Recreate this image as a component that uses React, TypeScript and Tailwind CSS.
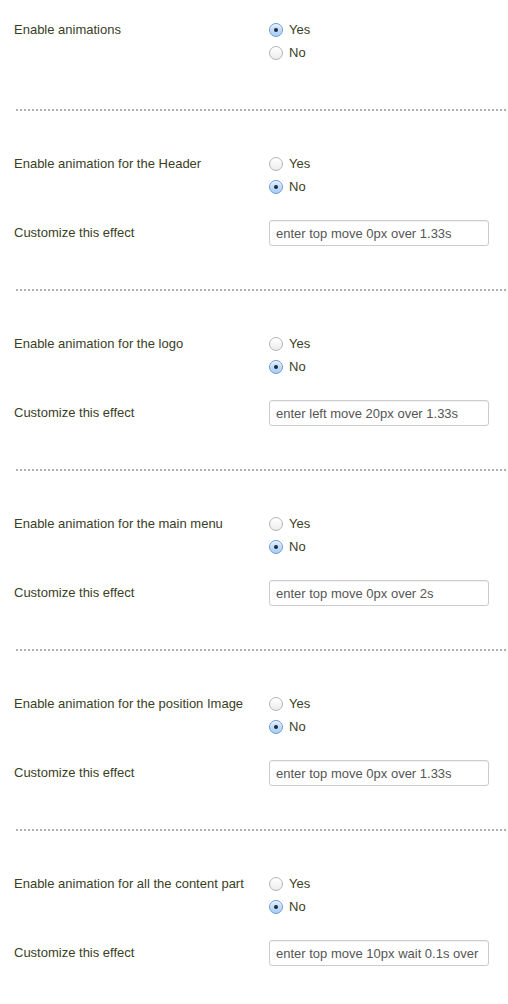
import React from 'react';

type Section = {
  label: string;
  enabled: boolean;
  effect?: string;
};

const sections: Section[] = [
  { label: 'Enable animations', enabled: true },
  { label: 'Enable animation for the Header', enabled: false, effect: 'enter top move 0px over 1.33s' },
  { label: 'Enable animation for the logo', enabled: false, effect: 'enter left move 20px over 1.33s' },
  { label: 'Enable animation for the main menu', enabled: false, effect: 'enter top move 0px over 2s' },
  { label: 'Enable animation for the position Image', enabled: false, effect: 'enter top move 0px over 1.33s' },
  { label: 'Enable animation for all the content part', enabled: false, effect: 'enter top move 10px wait 0.1s over 1.33s' },
];

function Radio({ checked, text }: { checked: boolean; text: string }) {
  return (
    <label className="flex h-[18px] items-center">
      {checked ? (
        <span className="flex h-[14px] w-[14px] items-center justify-center rounded-full border border-[#6b9bd6] bg-gradient-to-b from-[#dcebfb] to-[#a9cdf3] shadow-[inset_0_1px_1px_rgba(255,255,255,0.8)]">
          <span className="h-[4px] w-[4px] rounded-full bg-[#1c2a3f]" />
        </span>
      ) : (
        <span className="h-[14px] w-[14px] rounded-full border border-[#b5b5b5] bg-gradient-to-b from-[#ffffff] to-[#ececec]" />
      )}
      <span className="ml-[6px]">{text}</span>
    </label>
  );
}

function SettingsBlock({ section, first }: { section: Section; first: boolean }) {
  return (
    <div className={first ? 'pt-[21px] pb-[47px]' : 'pt-[44px] pb-[43px]'}>
      <div className="flex">
        <div className="w-[255px] leading-[18px]">{section.label}</div>
        <div className="flex flex-col gap-[5px]">
          <Radio checked={section.enabled} text="Yes" />
          <Radio checked={!section.enabled} text="No" />
        </div>
      </div>
      {section.effect ? (
        <div className="mt-[24px] flex items-center">
          <div className="w-[255px]">Customize this effect</div>
          <input
            type="text"
            defaultValue={section.effect}
            className="h-[26px] w-[220px] rounded-[3px] border border-[#cccccc] bg-white px-[6px] text-[13px] text-[#555555] shadow-[inset_0_1px_1px_rgba(0,0,0,0.06)] outline-none"
          />
        </div>
      ) : null}
    </div>
  );
}

export default function App() {
  return (
    <div className="min-h-[1004px] w-[508px] bg-white pl-[14px] text-[13px] text-[#3a401f] [font-family:'Liberation_Sans',Arial,sans-serif]">
      {sections.map((section, index) => (
        <div key={section.label}>
          {index > 0 ? (
            <div className="ml-[2px] mr-[2px] h-[2px] bg-[linear-gradient(to_right,#b0b0b0_50%,transparent_50%)] bg-[length:4px_2px]" />
          ) : null}
          <SettingsBlock section={section} first={index === 0} />
        </div>
      ))}
    </div>
  );
}
